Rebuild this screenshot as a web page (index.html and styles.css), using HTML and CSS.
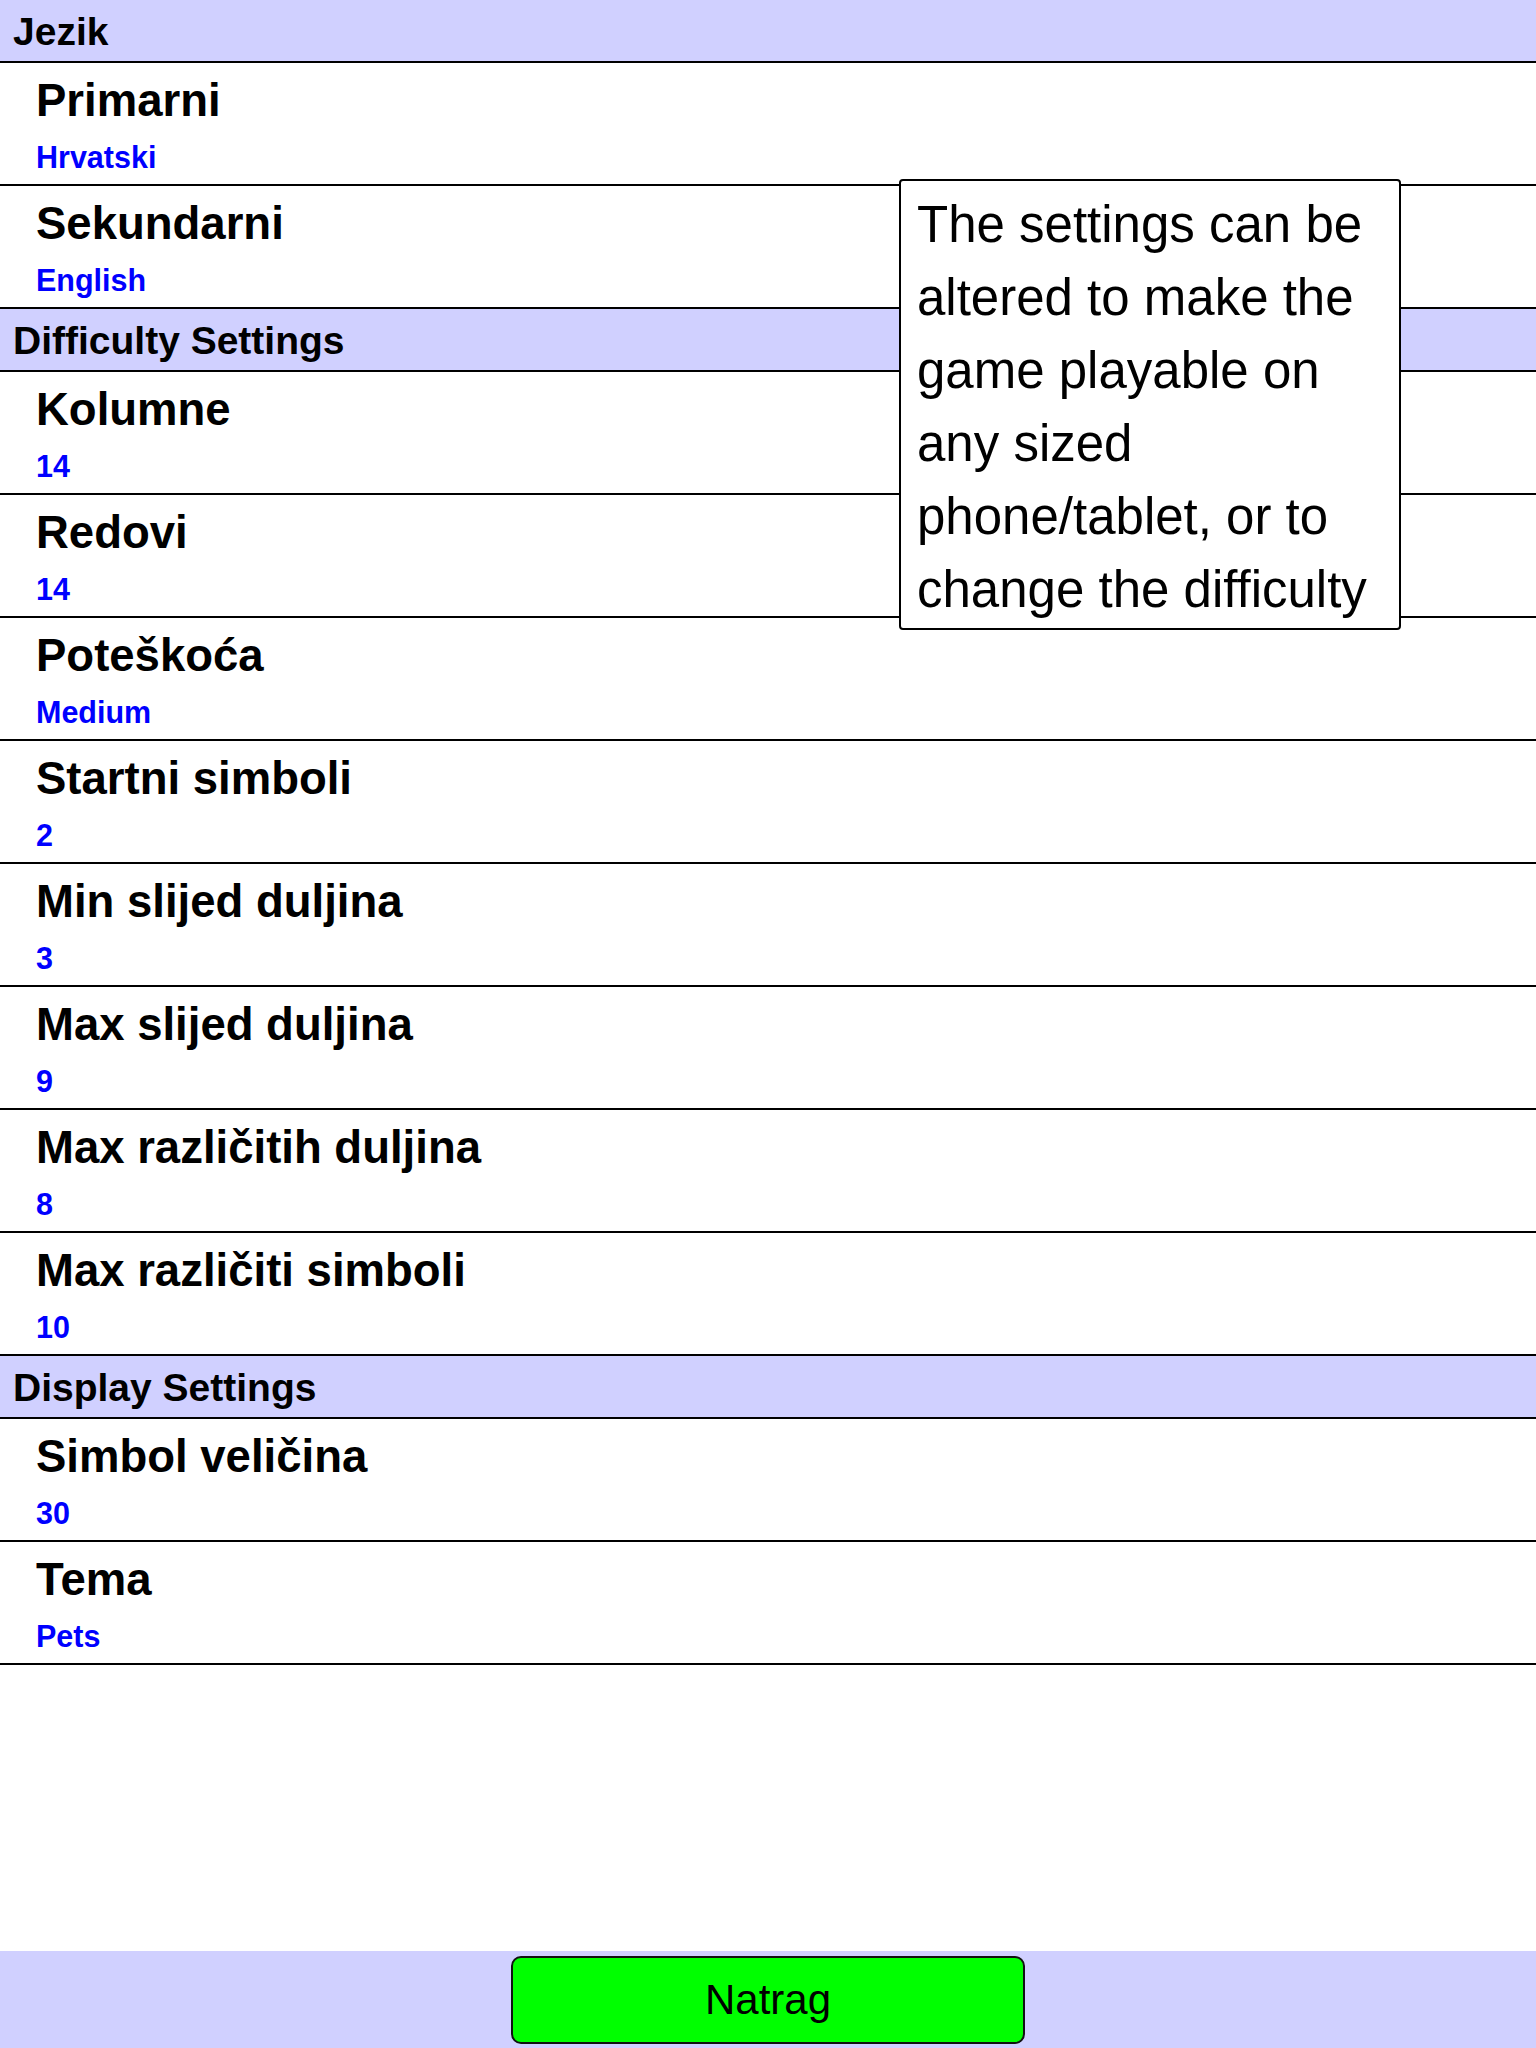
FILE: index.html
```html
<html lang="hr">
<head>
    <meta charset="UTF-8">
    <meta name="viewport" content="width=device-width, initial-scale=1.0">
    <title>Postavke</title>
    <link rel="stylesheet" href="styles.css">
</head>
<body>
    <div class="page">
        <div class="settings">
            <div class="group-title">Jezik</div>
            <div class="setting">
                <div class="setting-name">Primarni</div>
                <div class="setting-value">Hrvatski</div>
            </div>
            <div class="setting">
                <div class="setting-name">Sekundarni</div>
                <div class="setting-value">English</div>
            </div>

            <div class="group-title">Difficulty Settings</div>
            <div class="setting">
                <div class="setting-name">Kolumne</div>
                <div class="setting-value">14</div>
            </div>
            <div class="setting">
                <div class="setting-name">Redovi</div>
                <div class="setting-value">14</div>
            </div>
            <div class="setting">
                <div class="setting-name">Poteškoća</div>
                <div class="setting-value">Medium</div>
            </div>
            <div class="setting">
                <div class="setting-name">Startni simboli</div>
                <div class="setting-value">2</div>
            </div>
            <div class="setting">
                <div class="setting-name">Min slijed duljina</div>
                <div class="setting-value">3</div>
            </div>
            <div class="setting">
                <div class="setting-name">Max slijed duljina</div>
                <div class="setting-value">9</div>
            </div>
            <div class="setting">
                <div class="setting-name">Max različitih duljina</div>
                <div class="setting-value">8</div>
            </div>
            <div class="setting">
                <div class="setting-name">Max različiti simboli</div>
                <div class="setting-value">10</div>
            </div>

            <div class="group-title">Display Settings</div>
            <div class="setting">
                <div class="setting-name">Simbol veličina</div>
                <div class="setting-value">30</div>
            </div>
            <div class="setting">
                <div class="setting-name">Tema</div>
                <div class="setting-value">Pets</div>
            </div>
        </div>

        <!-- savjet preko liste -->
        <div class="hint">The settings can be<br>altered to make the<br>game playable on<br>any sized<br>phone/tablet, or to<br>change the difficulty</div>

        <div class="footer">
            <button class="back-button">Natrag</button>
        </div>
    </div>
</body>
</html>
```

FILE: styles.css
```css
body {
    margin: 0;
    font-family: "Liberation Sans", Arial, sans-serif;
    background-color: white;
    color: black;
}

.page {
    position: relative;
    height: 2048px;
    display: flex;
    flex-direction: column;
}

.settings {
    flex: 1;
}

.group-title {
    height: 61px;
    line-height: 63px;
    padding-left: 13px;
    font-size: 39px;
    font-weight: bold;
    background-color: #d0d0ff;
    border-bottom: 2px solid black;
}

.setting {
    height: 121px;
    padding-left: 36px;
    border-bottom: 2px solid black;
}

.setting-name {
    padding-top: 12px;
    font-size: 45.5px;
    font-weight: bold;
    line-height: 52px;
}

.setting-value {
    margin-top: 13px;
    font-size: 30.5px;
    font-weight: bold;
    line-height: 34px;
    color: #0000ff;
}

/* savjet - stoji iznad redova */
.hint {
    position: absolute;
    top: 179px;
    left: 899px;
    width: 480px;
    padding: 7px 2px 2px 16px;
    background-color: white;
    border: 2px solid black;
    border-radius: 4px;
    font-size: 51px;
    line-height: 73px;
    white-space: nowrap;
}

.footer {
    height: 97px;
    background-color: #d0d0ff;
    display: flex;
    align-items: center;
    justify-content: center;
}

.back-button {
    width: 514px;
    height: 88px;
    margin-top: 1px;
    background-color: #00ff00;
    border: 2px solid #111;
    border-radius: 10px;
    font-family: "Liberation Sans", Arial, sans-serif;
    font-size: 42px;
    color: black;
}
```
